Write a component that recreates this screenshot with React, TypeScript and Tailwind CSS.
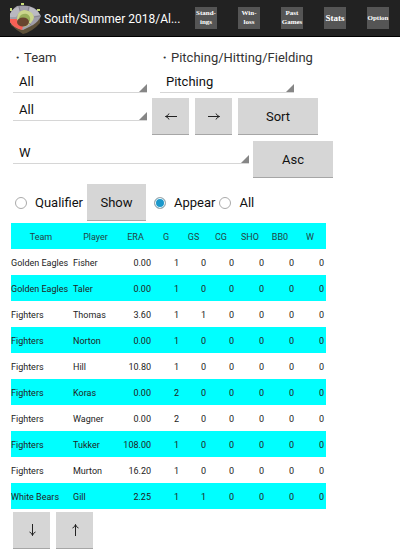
import React, { useState } from "react";
import clsx from "clsx";

const columns = [
  { name: "Team", width: "w-[62px]" },
  { name: "Player", width: "w-[47px]" },
  { name: "ERA", width: "w-[33px]" },
  { name: "G", width: "w-[28px]" },
  { name: "GS", width: "w-[27px]" },
  { name: "CG", width: "w-[28px]" },
  { name: "SHO", width: "w-[30px]" },
  { name: "BB0", width: "w-[30px]" },
  { name: "W", width: "w-[30px]" },
];

const rows = [
  ["Golden Eagles", "Fisher", "0.00", "1", "0", "0", "0", "0", "0"],
  ["Golden Eagles", "Taler", "0.00", "1", "0", "0", "0", "0", "0"],
  ["Fighters", "Thomas", "3.60", "1", "1", "0", "0", "0", "0"],
  ["Fighters", "Norton", "0.00", "1", "0", "0", "0", "0", "0"],
  ["Fighters", "Hill", "10.80", "1", "0", "0", "0", "0", "0"],
  ["Fighters", "Koras", "0.00", "2", "0", "0", "0", "0", "0"],
  ["Fighters", "Wagner", "0.00", "2", "0", "0", "0", "0", "0"],
  ["Fighters", "Tukker", "108.00", "1", "0", "0", "0", "0", "0"],
  ["Fighters", "Murton", "16.20", "1", "0", "0", "0", "0", "0"],
  ["White Bears", "Gill", "2.25", "1", "1", "0", "0", "0", "0"],
];

const menu = [
  { lines: ["Stand-", "ings"], size: "text-[7px]" },
  { lines: ["Win-", "loss"], size: "text-[7px]" },
  { lines: ["Past", "Games"], size: "text-[7px]" },
  { lines: ["Stats"], size: "text-[9px]" },
  { lines: ["Option"], size: "text-[7px]" },
];

const StadiumLogo = () => (
  <svg viewBox="0 0 34 32" className="h-8 w-[34px] shrink-0" aria-hidden="true">
    <path d="M2 18L3 23Q8 28 15 32Q24 30 32 21L32 16L20 24L14 27Z" fill="#5d5038" />
    <path d="M2 13Q3 8 9 4Q14 3 21 4Q29 6 33 14Q31 19 25 23L15 28Q6 26 2 20Z" fill="#a09ea9" />
    <path d="M2 12Q4 7 10 5L12 9L8 15L2 15Z" fill="#b9b8c0" />
    <path d="M22 5Q29 7 32 13L26 14L21 9Z" fill="#bcbbc3" />
    <path d="M2 17L9 17Q9 22 15 24L14 28Q6 26 2 20Z" fill="#f76055" />
    <path d="M9 17Q9 9 16 8Q25 9 26 15Q25 21 17 25Q10 23 9 17Z" fill="#cbd58c" />
    <path d="M11 16Q13 11 19 12Q23 14 22 19L17 22Z" fill="#98ad59" />
    <ellipse cx="15" cy="20" rx="6" ry="4.5" fill="#68452f" />
    <path d="M11 4L12 9M21 4L20 9M32 14L26 15M24 24L21 21" fill="none" stroke="#7b7985" strokeWidth=".7" />
    <path d="M13 1h3v2h-3zM2 6h2v3H2zM29 7h3v2h-3z" fill="#c9dc78" />
  </svg>
);

type SpinnerProps = {
  label: string;
  options: string[];
  className: string;
};

const Spinner = ({ label, options, className }: SpinnerProps) => (
  <div className={clsx("relative border-b border-[#d6d6d6]", className)}>
    <select
      aria-label={label}
      className="block h-5 w-full appearance-none bg-transparent pl-1.5 pr-3 text-[13px] leading-5 outline-none"
    >
      {options.map((option) => (
        <option key={option}>{option}</option>
      ))}
    </select>
    <svg viewBox="0 0 8 8" className="pointer-events-none absolute bottom-0 right-0 size-2" aria-hidden="true">
      <path d="M8 0V8H0Z" fill="#868686" />
    </svg>
  </div>
);

type HoloButtonProps = {
  children: React.ReactNode;
  className: string;
  label?: string;
};

const HoloButton = ({ children, className, label }: HoloButtonProps) => (
  <button
    type="button"
    aria-label={label}
    className={clsx(
      "flex h-[37px] shrink-0 items-center justify-center border-b border-[#a6a6a6] bg-[#d6d6d6] text-[13px] hover:bg-[#cacaca]",
      className
    )}
  >
    {children}
  </button>
);

const Arrow = ({ d }: { d: string }) => (
  <svg viewBox="0 0 14 14" className="size-3.5" fill="none" stroke="#222" aria-hidden="true">
    <path d={d} />
  </svg>
);

const App = () => {
  const [filter, setFilter] = useState("Appear");

  const radio = (name: string) => (
    <label className="flex items-center gap-2">
      <input
        type="radio"
        name="filter"
        checked={filter === name}
        onChange={() => setFilter(name)}
        className="size-3 appearance-none rounded-full border border-[#aaa] bg-white checked:bg-[#1b98cb] checked:shadow-[inset_0_0_0_1px_white]"
      />
      {name}
    </label>
  );

  return (
    <div className="min-h-screen bg-white font-['Roboto',sans-serif] text-[13px] text-[#111]">
      <header className="flex h-[37px] items-center border-b border-black bg-[#222] pl-2">
        <StadiumLogo />
        <h1 className="min-w-0 flex-1 truncate pl-0.5 pt-0.5 text-[12px] text-white">South/Summer 2018/Al...</h1>
        <nav className="flex shrink-0 gap-[21px] pr-[11px]">
          {menu.map((item) => (
            <button
              key={item.lines[0]}
              type="button"
              className={clsx(
                "flex size-[22px] flex-col items-center justify-center bg-[#555] font-['Liberation_Serif',serif] font-bold leading-[9px] text-white",
                item.size
              )}
            >
              {item.lines.map((line) => (
                <span key={line}>{line}</span>
              ))}
            </button>
          ))}
        </nav>
      </header>

      <main className="px-[11px] pt-3">
        <div className="flex gap-[13px] text-[#333]">
          <p className="w-[134px] leading-[18px]">・Team</p>
          <p className="leading-[18px]">・Pitching/Hitting/Fielding</p>
        </div>
        <div className="mt-[5px] flex gap-[13px] pl-0.5">
          <Spinner label="Team" options={["All", "Fighters", "Golden Eagles", "White Bears"]} className="w-[134px]" />
          <Spinner label="Pitching/Hitting/Fielding" options={["Pitching", "Hitting", "Fielding"]} className="w-[134px]" />
        </div>
        <div className="mt-[5px] flex items-start pl-0.5">
          <Spinner label="Players" options={["All"]} className="mt-0.5 w-[134px]" />
          <div className="flex gap-1.5 pl-[5px]">
            <HoloButton className="w-[37px]" label="Previous">
              <Arrow d="M13 7.5H1.5M5 4.5Q4 7 1.5 7.5Q4 8 5 10.5" />
            </HoloButton>
            <HoloButton className="w-[37px]" label="Next">
              <Arrow d="M1 7.5H12.5M9 4.5Q10 7 12.5 7.5Q10 8 9 10.5" />
            </HoloButton>
            <HoloButton className="w-20 pt-0.5">Sort</HoloButton>
          </div>
        </div>
        <div className="mt-1.5 flex items-start gap-1 pl-0.5">
          <Spinner label="Sort by" options={["W", "ERA", "G", "GS", "CG", "SHO", "BB0"]} className="mt-0.5 w-[236px]" />
          <HoloButton className="w-20 pt-0.5">Asc</HoloButton>
        </div>
        <div className="mt-1.5 flex items-center pl-1">
          {radio("Qualifier")}
          <HoloButton className="ml-1 mr-2 w-[59px] pt-0.5">Show</HoloButton>
          {radio("Appear")}
          <div className="pl-1">{radio("All")}</div>
        </div>

        <table className="mt-0.5 w-full max-w-[315px] table-fixed text-[9px] text-[#222]">
          <thead>
            <tr className="h-[26px] bg-[#0ff]">
              {columns.map((column) => (
                <th key={column.name} className={clsx("p-0 pr-0.5 pt-[3px] text-center font-normal text-[#244]", column.width)}>
                  {column.name}
                </th>
              ))}
            </tr>
          </thead>
          <tbody>
            {rows.map((row) => (
              <tr key={row[1]} className="h-[26px] even:bg-[#0ff]">
                {row.map((value, i) => (
                  <td key={i} className={clsx("whitespace-nowrap p-0 pt-[3px]", i > 1 && "pr-0.5 text-right")}>
                    {value}
                  </td>
                ))}
              </tr>
            ))}
          </tbody>
        </table>

        <div className="flex gap-1.5 pb-1 pl-0.5 pt-[3px]">
          <HoloButton className="w-[37px]" label="Descending">
            <Arrow d="M7.5 1V12.5M4.5 9Q7 10 7.5 12.5Q8 10 10.5 9" />
          </HoloButton>
          <HoloButton className="w-[37px]" label="Ascending">
            <Arrow d="M7.5 13V1.5M4.5 5Q7 4 7.5 1.5Q8 4 10.5 5" />
          </HoloButton>
        </div>
      </main>
    </div>
  );
};

export default App;
